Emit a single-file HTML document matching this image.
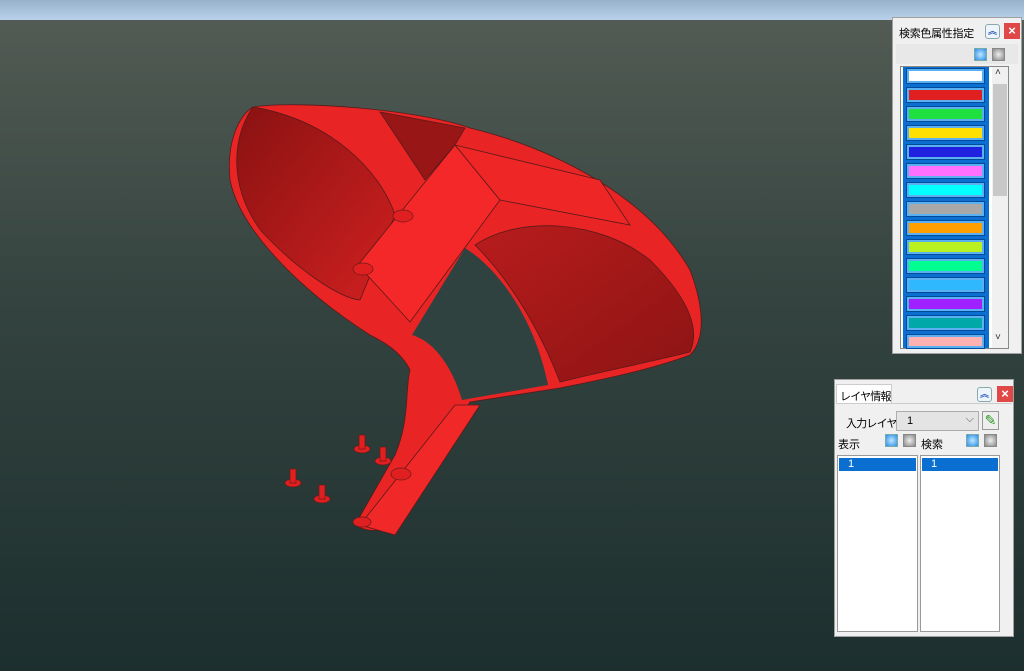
<!DOCTYPE html>
<html><head><meta charset="utf-8"><style>
*{box-sizing:border-box;margin:0;padding:0}
body{width:1024px;height:671px;overflow:hidden;position:relative;font-family:"Liberation Sans","Noto Sans CJK JP",sans-serif;font-size:11px;color:#000;background:linear-gradient(#525b54 20px,#34433f 300px,#1c2f2e 671px)}
div{white-space:nowrap}
.top{position:absolute;left:0;top:0;width:1024px;height:20px;background:linear-gradient(#97b1cb,#b9d1eb)}
.p{position:absolute;background:#f0f0f0;border:1px solid #a0a0a0}
.ib{position:absolute;width:15px;height:15px;border:1px solid #8aa;background:#eef4fb;border-radius:3px;font-size:9px;color:#2050b0;text-align:center;line-height:13px;font-weight:bold}
.x{position:absolute;width:16px;height:16px;background:#e04848;color:#fff;font-size:13px;text-align:center;line-height:15px;font-weight:bold}
.bb{position:absolute;width:13px;height:13px;border:1px solid #7aa;background:radial-gradient(#bfe8ff,#2b8ce8)}
.gb{position:absolute;width:13px;height:13px;border:1px solid #888;background:radial-gradient(#eee,#888)}
.sw{position:absolute;left:907px;width:77px;height:14px;border:2px solid #5ab0f0;outline:1px solid #004a9a}
</style></head><body>
<div class="top"></div>
<svg style="position:absolute;left:0;top:0" width="1024" height="671">
<defs>
<linearGradient id="lw" x1="0" y1="0" x2="1" y2="1"><stop offset="0" stop-color="#8a1212"/><stop offset="1" stop-color="#d02020"/></linearGradient>
<linearGradient id="rw" x1="0" y1="0" x2="1" y2="1"><stop offset="0" stop-color="#b81c1c"/><stop offset="1" stop-color="#8c1414"/></linearGradient>
</defs>
<g stroke="#5a1a1a" stroke-width="0.8">
<path d="M253,107 C300,100 420,110 470,128 C560,150 650,200 690,270 C705,310 705,340 690,355 C650,370 600,380 560,388 L470,402 L400,520 C395,530 370,535 355,525 L395,455 C410,420 405,390 410,370 C400,350 380,340 370,335 C300,290 240,230 230,180 C226,140 240,115 253,107 Z" fill="#e82424"/>
<path d="M465,248 C500,270 535,320 548,385 L462,400 C450,360 430,340 412,335 Z" fill="#2f4240" stroke="none"/>
<path d="M253,107 C230,140 230,190 262,232 C300,272 340,298 360,300 L395,215 C380,170 330,120 253,107 Z" fill="url(#lw)"/>
<path d="M475,245 C520,215 600,220 650,260 C690,300 700,330 690,352 C650,362 600,372 560,382 C540,330 510,280 475,245 Z" fill="url(#rw)"/>
<path d="M380,112 L465,128 L455,145 L425,180 C405,150 392,130 380,112Z" fill="#981616"/>
<path d="M358,265 L455,145 L500,200 L410,322 Z" fill="#f42828"/>
<path d="M455,145 L500,200 L630,225 L600,180 Z" fill="#ee2626"/>
<path d="M455,405 L480,405 L395,535 L360,525 Z" fill="#f02828"/>
</g>
<g fill="#e02020" stroke="#6a1a1a" stroke-width="0.7">
<ellipse cx="403" cy="216" rx="10" ry="6"/><ellipse cx="363" cy="269" rx="10" ry="6"/>
<ellipse cx="401" cy="474" rx="10" ry="6"/><ellipse cx="362" cy="522" rx="9" ry="5"/>
<ellipse cx="362" cy="449" rx="8" ry="4"/><rect x="359" y="435" width="6" height="14"/>
<ellipse cx="383" cy="461" rx="8" ry="4"/><rect x="380" y="447" width="6" height="14"/>
<ellipse cx="293" cy="483" rx="8" ry="4"/><rect x="290" y="469" width="6" height="14"/>
<ellipse cx="322" cy="499" rx="8" ry="4"/><rect x="319" y="485" width="6" height="14"/>
</g>
</svg>

<div class="p" style="left:892px;top:17px;width:130px;height:337px"></div>
<div style="position:absolute;left:899px;top:25px;font-size:11px;letter-spacing:-0.3px">検索色属性指定</div>
<div class="ib" style="left:985px;top:24px">︽</div>
<div class="x" style="left:1004px;top:23px">×</div>
<div style="position:absolute;left:896px;top:44px;width:122px;height:20px;background:#e8e8e8"></div>
<div class="bb" style="left:974px;top:48px"></div><div class="gb" style="left:992px;top:48px"></div>
<div style="position:absolute;left:900px;top:66px;width:109px;height:283px;border:1px solid #888;background:#fff"></div>
<div style="position:absolute;left:903px;top:67px;width:86px;height:281px;background:#0a6fd0"></div>
<div style="position:absolute;left:992px;top:67px;width:16px;height:281px;background:#f0f0f0"></div>
<div style="position:absolute;left:993px;top:84px;width:14px;height:112px;background:#c8c8c8"></div>
<div style="position:absolute;left:995px;top:67px;font-size:10px;color:#333">˄</div>
<div style="position:absolute;left:995px;top:332px;font-size:10px;color:#333">˅</div>
<div class="sw" style="top:69px;background:#fff"></div>
<div class="sw" style="top:88px;background:#e02020"></div>
<div class="sw" style="top:107px;background:#20e040"></div>
<div class="sw" style="top:126px;background:#ffe000"></div>
<div class="sw" style="top:145px;background:#2020e0"></div>
<div class="sw" style="top:164px;background:#ff70ff"></div>
<div class="sw" style="top:183px;background:#00ffff"></div>
<div class="sw" style="top:202px;background:#a8a8a8"></div>
<div class="sw" style="top:221px;background:#ffa000"></div>
<div class="sw" style="top:240px;background:#b8f020"></div>
<div class="sw" style="top:259px;background:#00ff90"></div>
<div class="sw" style="top:278px;background:#30b8ff"></div>
<div class="sw" style="top:297px;background:#a020ff"></div>
<div class="sw" style="top:316px;background:#00a8a8"></div>
<div class="sw" style="top:335px;background:#ffb0b0;height:13px"></div>

<div class="p" style="left:834px;top:379px;width:180px;height:258px"></div>
<div style="position:absolute;left:836px;top:384px;width:56px;height:20px;background:#fff;border:1px solid #ccc;border-bottom:none;padding:3px 0 0 3px;font-size:11px;letter-spacing:-0.8px">レイヤ情報</div>
<div style="position:absolute;left:836px;top:403px;width:176px;border-top:1px solid #ccc"></div>
<div class="ib" style="left:977px;top:387px">︽</div>
<div class="x" style="left:997px;top:386px">×</div>
<div style="position:absolute;left:846px;top:415px;letter-spacing:-0.8px">入力レイヤ</div>
<div style="position:absolute;left:896px;top:411px;width:83px;height:20px;background:#e4e4e4;border:1px solid #adadad;padding:3px 0 0 10px">1<span style="position:absolute;right:4px;top:1px;color:#555">⌵</span></div>
<div style="position:absolute;left:982px;top:411px;width:17px;height:19px;border:1px solid #999;background:#eee;color:#2a9a20;font-size:14px;line-height:17px;text-align:center">✎</div>
<div style="position:absolute;left:838px;top:436px">表示</div>
<div class="bb" style="left:885px;top:434px"></div><div class="gb" style="left:903px;top:434px"></div>
<div style="position:absolute;left:921px;top:436px">検索</div>
<div class="bb" style="left:966px;top:434px"></div><div class="gb" style="left:984px;top:434px"></div>
<div style="position:absolute;left:837px;top:455px;width:81px;height:177px;background:#fff;border:1px solid #999"><div style="margin:2px 1px;height:13px;background:#0a6fd0;color:#fff;padding-left:9px;line-height:13px">1</div></div>
<div style="position:absolute;left:920px;top:455px;width:80px;height:177px;background:#fff;border:1px solid #999"><div style="margin:2px 1px;height:13px;background:#0a6fd0;color:#fff;padding-left:9px;line-height:13px">1</div></div>
</body></html>
